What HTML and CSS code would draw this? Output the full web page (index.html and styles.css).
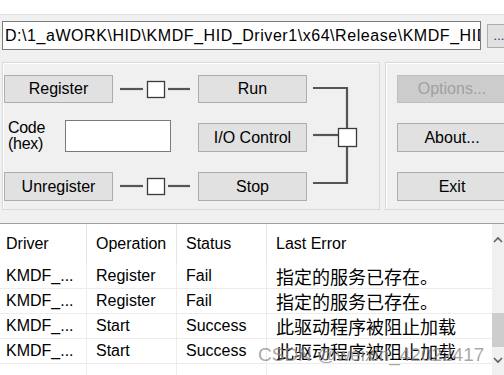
FILE: index.html
```html
<!DOCTYPE html>
<html>
<head>
<meta charset="utf-8">
<link rel="stylesheet" href="styles.css">
</head>
<body>
<div class="top"></div>
<div class="pathrow">
  <div class="pathbox">D:\1_aWORK\HID\KMDF_HID_Driver1\x64\Release\KMDF_HID_Driver1.sys</div>
  <div class="btn browse">...</div>
</div>
<div class="groups">
  <div class="group ctl">
    <div class="btn">Register</div>
    <svg class="conn" width="85" height="28" viewBox="0 0 85 28">
      <line x1="7" y1="14" x2="30" y2="14" stroke="#555" stroke-width="2.2"/>
      <rect x="34.5" y="6.5" width="17" height="16" fill="#fff" stroke="#3a3a3a" stroke-width="1.3"/>
      <line x1="55" y1="14" x2="77" y2="14" stroke="#555" stroke-width="2.2"/>
    </svg>
    <div class="btn">Run</div>
    <svg class="bracket" width="56" height="126" viewBox="0 0 56 126">
      <polyline points="6,13 40,13 40,53" fill="none" stroke="#555" stroke-width="2.2"/>
      <line x1="6" y1="60" x2="31" y2="60" stroke="#555" stroke-width="2.2"/>
      <polyline points="40,72 40,108 6,108" fill="none" stroke="#555" stroke-width="2.2"/>
      <rect x="31.5" y="53.5" width="18" height="18" fill="#fff" stroke="#3a3a3a" stroke-width="1.3"/>
    </svg>
    <div class="code"><span class="codelbl">Code<br>(hex)</span><div class="codebox"></div></div>
    <div class="btn">I/O Control</div>
    <div class="btn">Unregister</div>
    <svg class="conn" width="85" height="29" viewBox="0 0 85 29">
      <line x1="7" y1="14" x2="30" y2="14" stroke="#555" stroke-width="2.2"/>
      <rect x="34.5" y="6.5" width="17" height="16" fill="#fff" stroke="#3a3a3a" stroke-width="1.3"/>
      <line x1="55" y1="14" x2="77" y2="14" stroke="#555" stroke-width="2.2"/>
    </svg>
    <div class="btn">Stop</div>
  </div>
  <div class="group side">
    <div class="btn disabled">Options...</div>
    <div class="btn">About...</div>
    <div class="btn">Exit</div>
  </div>
</div>
<div class="list">
  <div class="lv">
    <div class="row head">
      <div class="c c1">Driver</div><div class="c c2">Operation</div><div class="c c3">Status</div><div class="c c4">Last Error</div>
    </div>
    <div class="row">
      <div class="c c1">KMDF_...</div><div class="c c2">Register</div><div class="c c3">Fail</div><div class="c c4 zh">指定的服务已存在。</div>
    </div>
    <div class="row">
      <div class="c c1">KMDF_...</div><div class="c c2">Register</div><div class="c c3">Fail</div><div class="c c4 zh">指定的服务已存在。</div>
    </div>
    <div class="row">
      <div class="c c1">KMDF_...</div><div class="c c2">Start</div><div class="c c3">Success</div><div class="c c4 zh">此驱动程序被阻止加载</div>
    </div>
    <div class="row">
      <div class="c c1">KMDF_...</div><div class="c c2">Start</div><div class="c c3">Success</div><div class="c c4 zh">此驱动程序被阻止加载</div>
    </div>
    <div class="row">
      <div class="c c1"></div><div class="c c2"></div><div class="c c3"></div><div class="c c4"></div>
    </div>
  </div>
  <div class="vscroll">
    <svg class="arrow" width="12" height="10" viewBox="0 0 12 10"><polyline points="2,7 6,3 10,7" fill="none" stroke="#606060" stroke-width="1.6"/></svg>
    <div class="thumb"></div>
    <svg class="arrow" width="12" height="10" viewBox="0 0 12 10"><polyline points="2,3 6,7 10,3" fill="none" stroke="#606060" stroke-width="1.6"/></svg>
  </div>
</div>
<div class="watermark">CSDN @weixin_42022417</div>
</body>
</html>
```
FILE: styles.css
```css
html, body {
  margin: 0;
  padding: 0;
}
body {
  width: 504px;
  height: 375px;
  overflow: hidden;
  background: #f0f0f0;
  font-family: "Liberation Sans", Arial, sans-serif;
  font-size: 16px;
  color: #000;
  position: relative;
}
.top {
  height: 14px;
  background: #fff;
  border-bottom: 1px solid #e0e0e0;
}
.pathrow {
  display: flex;
  gap: 6px;
  padding: 6px 0 0 2px;
  align-items: center;
}
.pathbox {
  flex: none;
  width: 475px;
  height: 27px;
  line-height: 27px;
  border: 1px solid #7a7a7a;
  background: #fff;
  padding-left: 2px;
  white-space: nowrap;
  overflow: hidden;
  letter-spacing: 0.55px;
}
.btn {
  box-sizing: border-box;
  background: #e1e1e1;
  border: 1px solid #adadad;
  display: flex;
  align-items: center;
  justify-content: center;
  white-space: nowrap;
}
.browse {
  flex: none;
  width: 24px;
  height: 24px;
  align-items: flex-end;
  padding-bottom: 4px;
  font-size: 13px;
  color: #333;
}
.groups {
  display: flex;
  gap: 5px;
  margin-top: 12px;
}
.group {
  flex: none;
  box-sizing: border-box;
  height: 148px;
  border: 1px solid #d9d9d9;
  box-shadow: inset 1px 1px 0 #fff;
  display: grid;
  grid-template-rows: 28px 29px 29px;
  row-gap: 20px;
  padding-top: 12px;
}
.ctl {
  width: 378px;
  margin-left: 2px;
  padding-left: 1px;
  grid-template-columns: 109px 85px 109px auto;
}
.bracket {
  grid-column: 4;
  grid-row: 1 / 4;
}
.conn {
  display: block;
}
.code {
  grid-column: 1 / 3;
  display: flex;
  align-items: center;
  align-self: end;
  height: 32px;
}
.codelbl {
  width: 57px;
  padding-left: 4px;
  line-height: 16px;
  letter-spacing: -0.3px;
}
.codebox {
  width: 104px;
  height: 30px;
  border: 1px solid #7a7a7a;
  background: #fff;
}
.side {
  width: 130px;
  padding-left: 11px;
  grid-template-columns: 110px;
}
.disabled {
  background: #cccccc;
  border-color: #bfbfbf;
  color: #a0a0a0;
}
.list {
  margin-top: 13px;
  border-top: 1px solid #a0a0a0;
  background: #fff;
  display: flex;
  height: 200px;
}
.lv {
  width: 492px;
  flex: none;
}
.row {
  display: flex;
  height: 25px;
}
.row.head {
  height: 40px;
}
.c {
  box-sizing: border-box;
  border-right: 1px solid #ececec;
  border-bottom: 1px solid #ececec;
  padding-left: 9px;
  display: flex;
  align-items: center;
  white-space: nowrap;
  overflow: hidden;
}
.head .c {
  border-bottom: none;
  border-right-color: #e5e5e5;
}
.c1 { width: 87px; padding-left: 6px; }
.c2 { width: 90px; }
.c3 { width: 90px; }
.c4 { flex: 1; border-right: none; }
.zh {
  font-family: "Noto Sans CJK SC", sans-serif;
  font-size: 18px;
}
.vscroll {
  flex: 1;
  background: #f0f0f0;
  display: flex;
  flex-direction: column;
  align-items: center;
  padding-top: 11px;
}
.thumb {
  width: 12px;
  height: 34px;
  background: #cdcdcd;
  margin-top: 68px;
  margin-bottom: 8px;
}
.watermark {
  position: absolute;
  left: 258px;
  top: 344px;
  font-size: 19px;
  color: rgba(140, 140, 140, 0.75);
  white-space: nowrap;
}
```
